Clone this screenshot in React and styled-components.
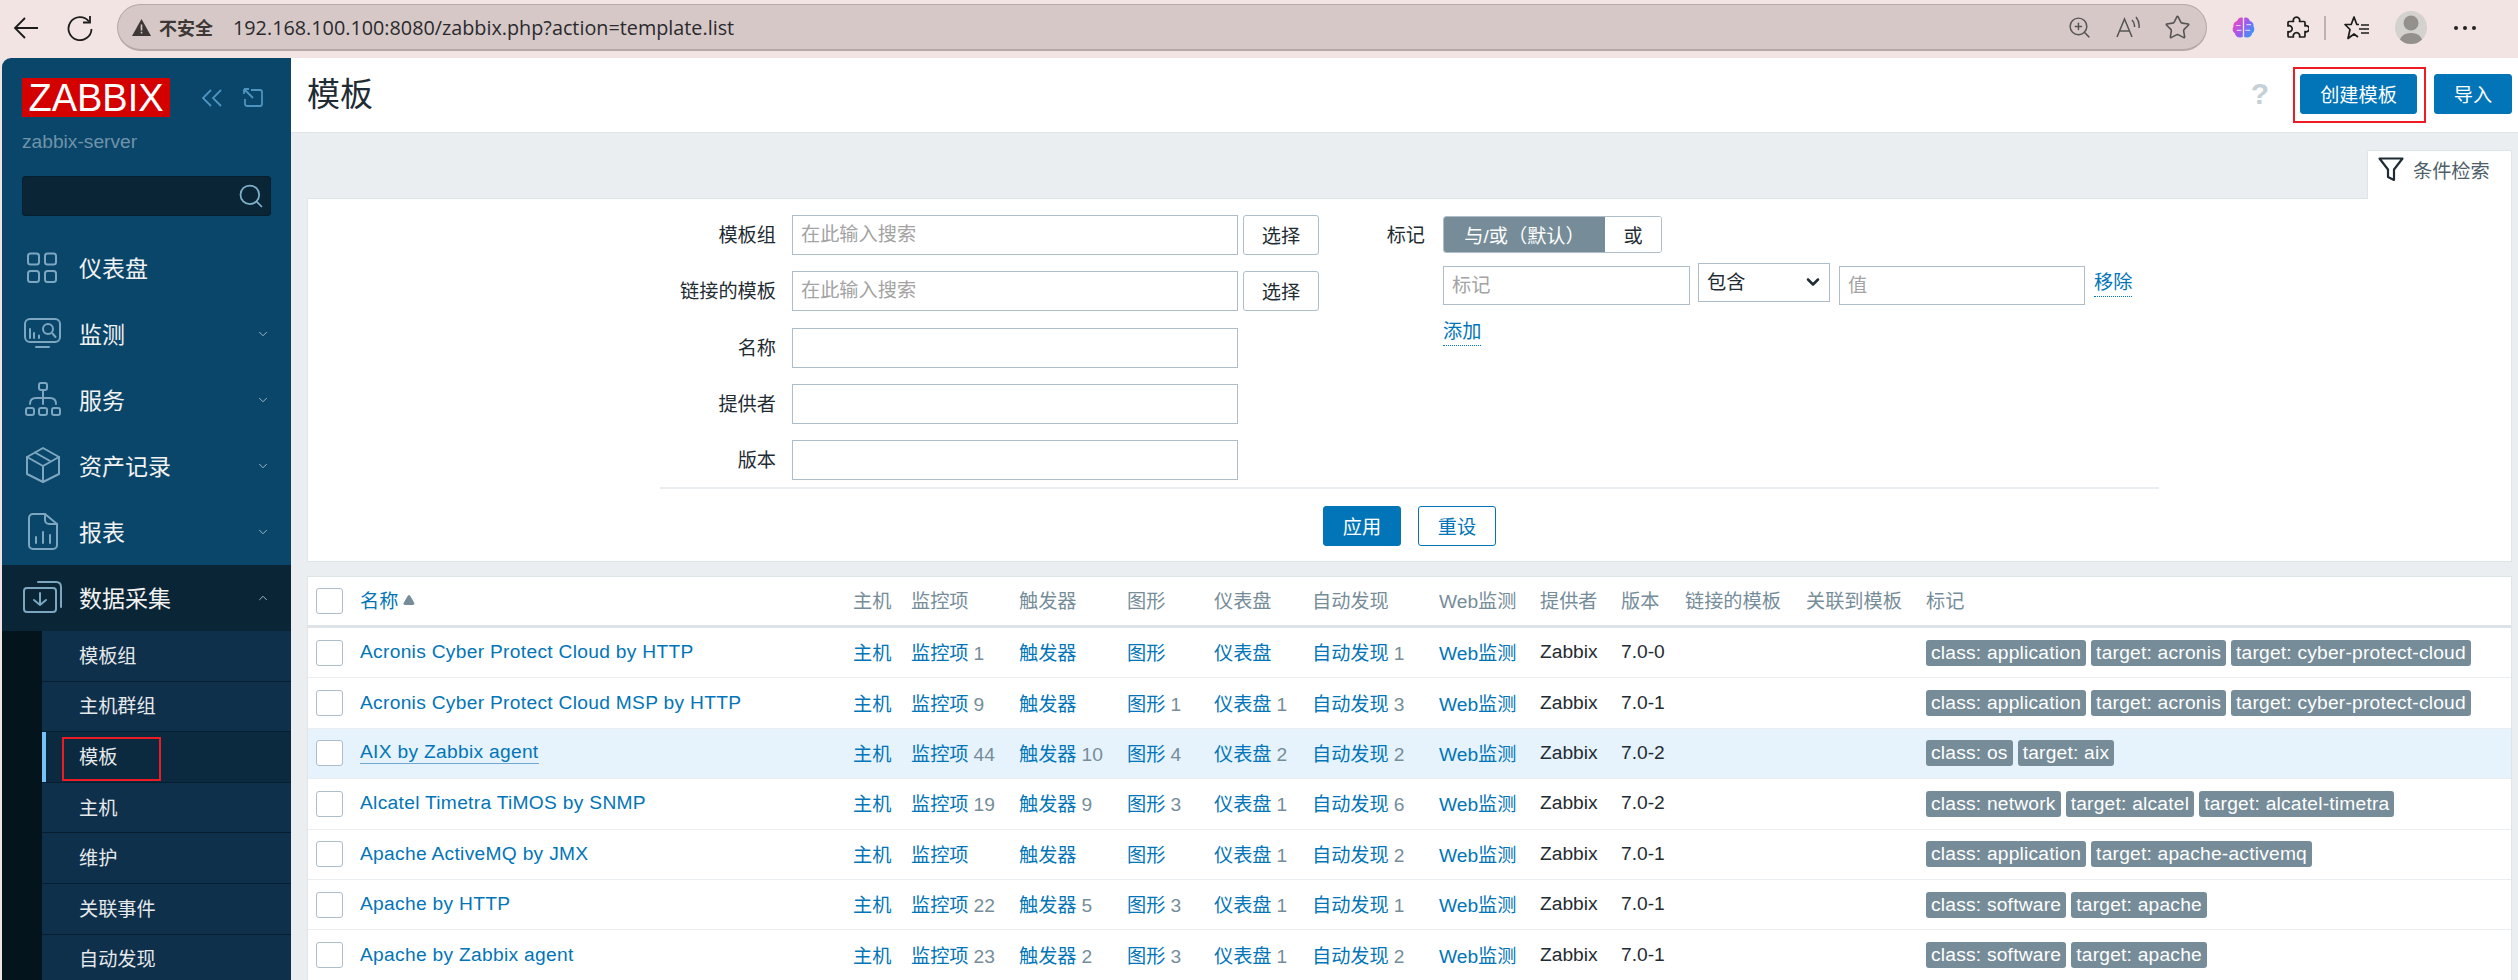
import React from "react";
import styled, { createGlobalStyle } from "styled-components";
import { ChevronDown, ChevronUp, Search, Star, ZoomIn, Triangle } from "lucide-react";

const GlobalStyle = createGlobalStyle`
  html, body {
    margin: 0;
    padding: 0;
    height: 980px;
    overflow: hidden;
    background: #f2e4e2;
    font-family: "Liberation Sans", "Noto Sans CJK SC", sans-serif;
    font-size: 19.2px;
    color: #1f2c33;
  }
  * {
    box-sizing: border-box;
  }
`;

const Page = styled.div`
  display: flex;
  flex-direction: column;
  width: 2518px;
  height: 980px;
  overflow: hidden;
`;

/* browser chrome */
const BrowserBar = styled.div`
  display: flex;
  align-items: center;
  flex: 0 0 58px;
  height: 58px;
  padding-bottom: 3px;
  background: #f2e4e2;
`;

const NavSlot = styled.div`
  display: flex;
  justify-content: center;
  align-items: center;
  width: ${(p) => p.$w || 54}px;
  flex: none;
  margin-left: ${(p) => p.$ml || 0}px;
`;

const AddressPill = styled.div`
  display: flex;
  align-items: center;
  width: 2090px;
  height: 47px;
  margin-left: 24px;
  margin-right: 9px;
  padding: 0 14px;
  border: 1px solid #b5a8a6;
  border-bottom-width: 2px;
  border-radius: 24px;
  background: #d6c8c6;
  flex: none;
`;

const Insecure = styled.span`
  margin-left: 8px;
  font-size: 18px;
  font-weight: 700;
  color: #3d3836;
  white-space: nowrap;
`;

const Url = styled.span`
  margin-left: 20px;
  font-family: "Open Sans", sans-serif;
  font-size: 19.8px;
  color: #2a2a2e;
  white-space: nowrap;
`;

const PillIcons = styled.div`
  display: flex;
  align-items: center;
  gap: 24px;
  margin-left: auto;
  margin-right: 1px;
  color: #555;
`;

const ToolDivider = styled.div`
  width: 2px;
  height: 24px;
  flex: none;
  background: #bfb3b1;
`;

const Dots = styled.span`
  display: flex;
  gap: 5px;
  i {
    display: block;
    width: 4px;
    height: 4px;
    border-radius: 50%;
    background: #222;
  }
`;

const Avatar = styled.div`
  width: 32px;
  height: 33px;
  border-radius: 50%;
  background: #d4d2cf;
  overflow: hidden;
  svg {
    display: block;
  }
`;

/* app frame */
const Frame = styled.div`
  display: flex;
  flex: 1;
  min-height: 0;
`;

const Sidebar = styled.aside`
  display: flex;
  flex-direction: column;
  flex: 0 0 289px;
  margin-left: 2px;
  background: #0a466a;
  border-top-left-radius: 9px;
  overflow: hidden;
`;

const SideHead = styled.div`
  display: flex;
  flex-direction: column;
  flex: none;
  padding: 20px 20px 0;
  height: 177px;
`;

const LogoRow = styled.div`
  display: flex;
  align-items: center;
`;

const Logo = styled.div`
  display: flex;
  align-items: center;
  justify-content: center;
  width: 148px;
  height: 39px;
  line-height: 1;
  background: #d40000;
  color: #fff;
  font-size: 38px;
`;

const LogoTools = styled.div`
  display: flex;
  align-items: center;
  gap: 20px;
  margin-left: 31px;
`;

const ServerName = styled.div`
  margin-top: 13px;
  font-size: 19.2px;
  line-height: 24px;
  color: #6f93a8;
`;

const SideSearch = styled.div`
  display: flex;
  align-items: center;
  justify-content: flex-end;
  width: 249px;
  height: 40px;
  margin-top: 22px;
  padding-right: 5px;
  background: #0a2535;
  border: 1px solid #06202f;
  border-radius: 3px;
  color: #7fb0c8;
`;

const MenuItem = styled.div`
  display: flex;
  align-items: center;
  height: 66px;
  padding-left: 21px;
  padding-right: 20px;
  font-size: 23px;
  color: #f2f2f2;
  background: ${(p) => (p.$open ? "#0a2535" : "transparent")};
  flex: none;
`;

const MenuIcon = styled.span`
  display: flex;
  width: 40px;
  height: 40px;
  flex: none;
  margin-right: 16px;
  color: #7da7c0;
`;

const MenuLabel = styled.span`
  flex: 1;
  margin-bottom: 3px;
`;

const MenuChevron = styled.span`
  display: flex;
  color: #a8c0cf;
  margin-right: 1px;
`;

const SubMenu = styled.div`
  display: flex;
  flex-direction: column;
  margin-left: 40px;
  background: #0f304b;
  box-shadow: -40px 0 0 #04141c;
  flex: 1;
`;

const SubItem = styled.div`
  position: relative;
  display: flex;
  align-items: center;
  flex: none;
  height: 50.6px;
  padding-left: 37px;
  padding-bottom: 2px;
  font-size: 19.2px;
  color: #e6e9eb;
  border-bottom: 1px solid #061e30;
  background: ${(p) => (p.$active ? "#0b2a40" : "transparent")};
  ${(p) => p.$active && "box-shadow: inset 4px 0 0 #74c2f7;"}
  ${(p) =>
    p.$active &&
    `&::after {
      content: "";
      position: absolute;
      left: 20px;
      top: 5px;
      width: 95px;
      height: 40px;
      border: 2px solid #ed1c24;
    }`}
`;

const Main = styled.main`
  display: flex;
  flex-direction: column;
  flex: 1;
  min-width: 0;
  background: #ebeef0;
`;

const Header = styled.header`
  display: flex;
  align-items: center;
  flex: 0 0 75px;
  padding: 0 6px 3px 16px;
  background: #fff;
  border-bottom: 1px solid #dfe4e7;
`;

const Title = styled.h1`
  margin: 0 0 3px;
  font-size: 33px;
  font-weight: 400;
  color: #1f2c33;
`;

const Help = styled.span`
  margin-left: auto;
  margin-right: 31px;
  font-size: 30px;
  font-weight: 700;
  color: #c5d0d7;
`;

const Button = styled.button`
  position: relative;
  display: inline-flex;
  align-items: center;
  justify-content: center;
  width: ${(p) => p.$w}px;
  height: ${(p) => p.$h || 40}px;
  margin-left: ${(p) => p.$ml || 0}px;
  padding: 0;
  flex: none;
  font: inherit;
  color: ${(p) => (p.$variant === "primary" ? "#fff" : p.$variant === "outline" ? "#0275b8" : "#1f2c33")};
  background: ${(p) => (p.$variant === "primary" ? "#0275b8" : "#fff")};
  border: 1px solid ${(p) => (p.$variant === "plain" ? "#aebdc7" : "#0275b8")};
  border-radius: 3px;
  ${(p) =>
    p.$marked &&
    `&::after {
      content: "";
      position: absolute;
      left: -8px;
      right: -10px;
      top: -8px;
      bottom: -10px;
      border: 2px solid #ed1c24;
    }`}
`;

const Content = styled.div`
  display: flex;
  flex-direction: column;
  padding: 0 6px 0 16px;
`;

const TabRow = styled.div`
  display: flex;
  justify-content: flex-end;
  height: 65px;
  padding-top: 17px;
`;

const FilterTab = styled.div`
  display: flex;
  align-items: center;
  width: 145px;
  height: 49px;
  margin-bottom: -1px;
  padding: 0 0 11px 10px;
  gap: 9px;
  background: #fff;
  border: 1px solid #dfe4e7;
  border-bottom: none;
  border-radius: 2px 2px 0 0;
  color: #4f5f69;
  position: relative;
  z-index: 1;
`;

const FilterPanel = styled.section`
  display: flex;
  flex-direction: column;
  align-items: center;
  height: 364px;
  padding-top: 16px;
  background: #fff;
  border: 1px solid #dfe4e7;
`;

const FilterBody = styled.div`
  display: flex;
  width: 1499px;
  height: 274px;
  border-bottom: 2px solid #ebeef0;
`;

const FilterLeft = styled.div`
  display: grid;
  grid-template-columns: 127px 446px 76px;
  grid-auto-rows: 40px;
  column-gap: 5px;
  row-gap: 16.3px;
  width: 659px;
  align-items: center;
  flex: none;
`;

const FieldLabel = styled.label`
  justify-self: end;
  margin-right: ${(p) => p.$mr ?? 11}px;
  margin-bottom: 2px;
  white-space: nowrap;
`;

const TagLabel = styled(FieldLabel)`
  margin-top: 5px;
`;

const Field = styled.input`
  width: ${(p) => p.$w || 446}px;
  height: ${(p) => p.$h || 40}px;
  padding: 0 8px;
  font: inherit;
  color: #1f2c33;
  background: #fff;
  border: 1px solid #aebdc7;
  border-radius: 0;
  outline: none;
  flex: none;
  &::placeholder {
    color: #a3a3a3;
    opacity: 1;
  }
`;

const FilterRight = styled.div`
  display: grid;
  grid-template-columns: 106px 1fr;
  column-gap: 18px;
  align-content: start;
`;

const TagControls = styled.div`
  display: flex;
  flex-direction: column;
  align-items: flex-start;
`;

const Toggle = styled.div`
  display: flex;
  width: 219px;
  height: 37px;
  margin-top: 1px;
  border: 1px solid #aebdc7;
  border-radius: 3px;
  overflow: hidden;
`;

const ToggleOption = styled.span`
  display: flex;
  align-items: center;
  justify-content: center;
  width: ${(p) => p.$w}px;
  background: ${(p) => (p.$on ? "#768d99" : "#fff")};
  color: ${(p) => (p.$on ? "#fff" : "#1f2c33")};
  flex: none;
`;

const TagRow = styled.div`
  display: flex;
  align-items: flex-start;
  margin-top: 13px;
`;

const SelectWrap = styled.div`
  position: relative;
  width: 132px;
  height: 39px;
  margin: -3px 9px 0 8px;
  flex: none;
  svg {
    position: absolute;
    right: 7px;
    top: 9px;
    pointer-events: none;
  }
`;

const Select = styled.select`
  appearance: none;
  width: 100%;
  height: 100%;
  padding: 0 8px;
  font: inherit;
  color: #1f2c33;
  background: #fff;
  border: 1px solid #aebdc7;
  border-radius: 0;
`;

const DottedLink = styled.a`
  display: inline-block;
  line-height: 26px;
  color: #0275b8;
  border-bottom: 1px dotted #0275b8;
  margin: ${(p) => p.$m || 0};
`;

const FilterActions = styled.div`
  display: flex;
  justify-content: center;
  gap: 17px;
  margin-top: 17px;
`;

const Table = styled.div`
  display: flex;
  flex-direction: column;
  margin-top: 14px;
  background: #fff;
  border: 1px solid #dfe4e7;
  border-bottom: none;
`;

const gridColumns =
  "52px 493px 58px 108px 108px 87px 98px 127px 101px 81px 64px 121px 120px 1fr";

const HeadRow = styled.div`
  display: grid;
  grid-template-columns: ${gridColumns};
  align-items: center;
  height: 51px;
  padding-bottom: 3px;
  border-bottom: 3px solid #dee3e8;
  color: #768d99;
  white-space: nowrap;
`;

const Row = styled.div`
  display: grid;
  grid-template-columns: ${gridColumns};
  align-items: center;
  flex: none;
  height: 50.4px;
  padding-bottom: 1px;
  border-bottom: 1px solid #ebeef0;
  background: ${(p) => (p.$hover ? "#e6f3fd" : "#fff")};
  white-space: nowrap;
`;

const CheckCell = styled.div`
  display: flex;
  padding-left: 8px;
  margin-bottom: -1px;
`;

const HeadCheckCell = styled(CheckCell)`
  margin-bottom: -3px;
`;

const Check = styled.span`
  display: block;
  width: 27px;
  height: 26px;
  background: #fff;
  border: 1px solid #aebdc7;
  border-radius: 3px;
`;

const SortHead = styled.span`
  display: flex;
  align-items: center;
  gap: 5px;
  color: #0275b8;
`;

const Link = styled.a`
  color: #0275b8;
  ${(p) => p.$underline && "border-bottom: 1px solid #6fa9d2;"}
`;

const NameCell = styled.div`
  display: flex;
  letter-spacing: 0.3px;
`;

const Count = styled.span`
  margin-left: 5px;
  color: #768d99;
`;

const Tags = styled.div`
  display: flex;
  gap: 5px;
  margin-bottom: -1px;
`;

const Tag = styled.span`
  height: 26px;
  padding: 0 5px;
  line-height: 25px;
  letter-spacing: 0.22px;
  color: #fff;
  background: #768d99;
  border-radius: 3px;
`;

/* drawings */
const Glyph = ({ size = 40, children, ...rest }) => (
  <svg
    width={size}
    height={size}
    viewBox={`0 0 ${size} ${size}`}
    fill="none"
    stroke="currentColor"
    strokeWidth="2"
    strokeLinecap="round"
    strokeLinejoin="round"
    {...rest}
  >
    {children}
  </svg>
);

const DashboardIcon = () => (
  <Glyph>
    <rect x="5" y="5.5" width="11" height="11" rx="2.5" />
    <rect x="22" y="5.5" width="11" height="11" rx="2.5" />
    <rect x="5" y="23" width="11" height="11" rx="2.5" />
    <rect x="22" y="23" width="11" height="11" rx="2.5" />
  </Glyph>
);

const MonitorIcon = () => (
  <Glyph>
    <rect x="2" y="5" width="35" height="23" rx="5" />
    <path d="M13 33h13M7 15v9M11 19v5M16 21.5v2.5M29.5 19.5l3 3.5" />
    <circle cx="25" cy="15" r="5" />
  </Glyph>
);

const ServicesIcon = () => (
  <Glyph>
    <rect x="16" y="3" width="8" height="7" rx="2" />
    <rect x="3" y="28" width="8" height="7" rx="2" />
    <rect x="16" y="28" width="8" height="7" rx="2" />
    <rect x="29" y="28" width="8" height="7" rx="2" />
    <path d="M20 10v14M7 24q0-6 6-6h14q6 0 6 6" />
  </Glyph>
);

const BoxIcon = () => (
  <Glyph>
    <path d="M20 2l16 9v17l-16 8-16-8V11z" />
    <path d="M4 11l16 9 16-9M20 20v16M12 6.5l16 9" />
  </Glyph>
);

const ReportIcon = () => (
  <Glyph>
    <path d="M22 2H10a4 4 0 0 0-4 4v27a4 4 0 0 0 4 4h20a4 4 0 0 0 4-4V12z" />
    <path d="M22 2v6a4 4 0 0 0 4 4h8M13 25v6M20 20v11M27 23v8" />
  </Glyph>
);

const DataIcon = () => (
  <Glyph>
    <rect x="1" y="10" width="32" height="24" rx="3" />
    <path d="M15 4h18q5 0 5 5v20M17 15v12M11 22l6 5 6-5" />
  </Glyph>
);

const BackArrow = () => (
  <svg width="26" height="24" viewBox="0 0 26 24" fill="none" stroke="#1c1c1c" strokeWidth="1.8">
    <path d="M25 12H2M12 2L2 12l10 10" />
  </svg>
);

const Reload = () => (
  <svg width="26" height="26" viewBox="0 0 26 26" fill="none" stroke="#1c1c1c" strokeWidth="1.8">
    <path d="M22 6.5A11.5 11.5 0 1 0 24.5 14" />
    <path d="M16 7.5h7V1" />
  </svg>
);

const WarningIcon = () => (
  <svg width="19" height="17" viewBox="0 0 19 17">
    <path d="M9.500 0L19 17H0z" fill="#3d3836" />
    <path d="M8.700 5.500h1.600v6H8.700zM8.700 12.800h1.600v1.700H8.700z" fill="#d6c8c6" />
  </svg>
);

const ReadAloud = () => (
  <svg width="24" height="24" viewBox="0 0 24 24" fill="none" stroke="#555" strokeWidth="1.5">
    <path d="M1 22L8.500 4 16 22M3.800 16h9.400M16 5q3 3 2.500 7M20 2q4 5 3 11" />
  </svg>
);

const BrainIcon = () => (
  <svg width="23" height="23" viewBox="0 0 24 24">
    <defs>
      <linearGradient id="brainGrad" x1="0" y1="0.2" x2="1" y2="0.8">
        <stop offset="0" stopColor="#f648b8" />
        <stop offset="0.5" stopColor="#9a5cf0" />
        <stop offset="1" stopColor="#2a9df8" />
      </linearGradient>
    </defs>
    <path
      d="M11.300 2C8.500 1 6 2.500 5.500 5 2.500 5.800 1 8.500 1.500 11 0 13.500.5 16.500 3 18c.3 3 3.500 5.500 8.300 4zM12.700 2c2.800-1 5.300.5 5.800 3 3 .8 4.500 3.500 4 6 1.500 2.500 1 5.500-1.500 7-.3 3-3.500 5.500-8.300 4z"
      fill="url(#brainGrad)"
    />
    <path d="M4 10h5M15 9h5M5 15h5M14 15h5" stroke="#fff" strokeWidth="1.100" opacity="0.65" />
  </svg>
);

const ExtensionIcon = () => (
  <svg width="24" height="24" viewBox="0 0 24 24" fill="none" stroke="#1c1c1c" strokeWidth="1.700" strokeLinejoin="round">
    <path d="M8.500 5.500a3.200 3.200 0 1 1 6 0H19a1 1 0 0 1 1 1V10a3 3 0 1 1 0 5.500V20a1 1 0 0 1-1 1h-4.500a3.200 3.200 0 1 0-6 0H4a1 1 0 0 1-1-1v-4.500a3 3 0 1 0 0-5.500V6.500a1 1 0 0 1 1-1z" />
  </svg>
);

const FavoritesIcon = () => (
  <svg width="26" height="24" viewBox="0 0 26 24" fill="none" stroke="#1c1c1c" strokeWidth="1.700" strokeLinejoin="round">
    <path d="M15 8.500h-2.200L10 1 7.200 8.500H1l5 5-2 9 6-4.500 4 3" />
    <path d="M17 9h8M15 13h10M17 17h8" />
  </svg>
);

const CollapseIcon = () => (
  <svg width="22" height="18" viewBox="0 0 22 18" fill="none" stroke="#4d94c0" strokeWidth="1.800">
    <path d="M10 1L2 9l8 8M20 1l-8 8 8 8" />
  </svg>
);

const KioskIcon = () => (
  <svg width="20" height="19" viewBox="0 0 20 19" fill="none" stroke="#4d94c0" strokeWidth="1.800">
    <path d="M8 2h9a2 2 0 0 1 2 2v12a2 2 0 0 1-2 2H4a2 2 0 0 1-2-2v-5M1 1l9 9M1 1h5M1 1v5" />
  </svg>
);

const FunnelIcon = () => (
  <svg width="26" height="25" viewBox="0 0 26 25" fill="none" stroke="#1f2c33" strokeWidth="2.200" strokeLinejoin="round">
    <path d="M1.500 1.500h23L16 12.500V23l-6-3v-7.500z" />
  </svg>
);

const menu = [
  { label: "仪表盘", icon: <DashboardIcon /> },
  { label: "监测", icon: <MonitorIcon />, more: true },
  { label: "服务", icon: <ServicesIcon />, more: true },
  { label: "资产记录", icon: <BoxIcon />, more: true },
  { label: "报表", icon: <ReportIcon />, more: true },
];

const subMenu = ["模板组", "主机群组", "模板", "主机", "维护", "关联事件", "自动发现"];

const classApp = "class: application";
const rows = [
  { name: "Acronis Cyber Protect Cloud by HTTP", items: 1, disc: 1, ver: "7.0-0", tags: [classApp, "target: acronis", "target: cyber-protect-cloud"] },
  { name: "Acronis Cyber Protect Cloud MSP by HTTP", items: 9, graphs: 1, dash: 1, disc: 3, ver: "7.0-1", tags: [classApp, "target: acronis", "target: cyber-protect-cloud"] },
  { name: "AIX by Zabbix agent", items: 44, trig: 10, graphs: 4, dash: 2, disc: 2, ver: "7.0-2", tags: ["class: os", "target: aix"], hover: true },
  { name: "Alcatel Timetra TiMOS by SNMP", items: 19, trig: 9, graphs: 3, dash: 1, disc: 6, ver: "7.0-2", tags: ["class: network", "target: alcatel", "target: alcatel-timetra"] },
  { name: "Apache ActiveMQ by JMX", dash: 1, disc: 2, ver: "7.0-1", tags: [classApp, "target: apache-activemq"] },
  { name: "Apache by HTTP", items: 22, trig: 5, graphs: 3, dash: 1, disc: 1, ver: "7.0-1", tags: ["class: software", "target: apache"] },
  { name: "Apache by Zabbix agent", items: 23, trig: 2, graphs: 3, dash: 1, disc: 2, ver: "7.0-1", tags: ["class: software", "target: apache"] },
];

const heads = ["主机", "监控项", "触发器", "图形", "仪表盘", "自动发现", "Web监测", "提供者", "版本", "链接的模板", "关联到模板", "标记"];

const CountLink = ({ label, n }) => (
  <div>
    <Link>{label}</Link>
    {n !== undefined && <Count>{n}</Count>}
  </div>
);

const App = () => (
  <Page>
    <GlobalStyle />
    <BrowserBar>
      <NavSlot $w={26} $ml={13}>
        <BackArrow />
      </NavSlot>
      <NavSlot $w={26} $ml={28}>
        <Reload />
      </NavSlot>
      <AddressPill>
        <WarningIcon />
        <Insecure>不安全</Insecure>
        <Url>192.168.100.100:8080/zabbix.php?action=template.list</Url>
        <PillIcons>
          <ZoomIn size={25} strokeWidth={1.4} />
          <ReadAloud />
          <Star size={27} strokeWidth={1.4} />
        </PillIcons>
      </AddressPill>
      <NavSlot>
        <BrainIcon />
      </NavSlot>
      <NavSlot>
        <ExtensionIcon />
      </NavSlot>
      <ToolDivider />
      <NavSlot $ml={4}>
        <FavoritesIcon />
      </NavSlot>
      <NavSlot>
        <Avatar>
          <svg width="32" height="33" viewBox="0 0 32 33">
            <circle cx="16" cy="12" r="7.500" fill="#94908b" />
            <path d="M4 33q1-11 12-11t12 11z" fill="#94908b" />
          </svg>
        </Avatar>
      </NavSlot>
      <NavSlot>
        <Dots>
          <i />
          <i />
          <i />
        </Dots>
      </NavSlot>
    </BrowserBar>

    <Frame>
      <Sidebar>
        <SideHead>
          <LogoRow>
            <Logo>ZABBIX</Logo>
            <LogoTools>
              <CollapseIcon />
              <KioskIcon />
            </LogoTools>
          </LogoRow>
          <ServerName>zabbix-server</ServerName>
          <SideSearch>
            <Search size={28} strokeWidth={1.5} />
          </SideSearch>
        </SideHead>
        {menu.map((m) => (
          <MenuItem key={m.label}>
            <MenuIcon>{m.icon}</MenuIcon>
            <MenuLabel>{m.label}</MenuLabel>
            {m.more && (
              <MenuChevron>
                <ChevronDown size={14} strokeWidth={1.6} />
              </MenuChevron>
            )}
          </MenuItem>
        ))}
        <MenuItem $open>
          <MenuIcon>
            <DataIcon />
          </MenuIcon>
          <MenuLabel>数据采集</MenuLabel>
          <MenuChevron>
            <ChevronUp size={14} strokeWidth={1.6} />
          </MenuChevron>
        </MenuItem>
        <SubMenu>
          {subMenu.map((s) => (
            <SubItem key={s} $active={s === "模板"}>
              {s}
            </SubItem>
          ))}
        </SubMenu>
      </Sidebar>

      <Main>
        <Header>
          <Title>模板</Title>
          <Help>?</Help>
          <Button $variant="primary" $w={117} $marked>
            创建模板
          </Button>
          <Button $variant="primary" $w={78} $ml={17}>
            导入
          </Button>
        </Header>
        <Content>
          <TabRow>
            <FilterTab>
              <FunnelIcon />
              条件检索
            </FilterTab>
          </TabRow>
          <FilterPanel>
            <FilterBody>
              <FilterLeft>
                <FieldLabel>模板组</FieldLabel>
                <Field placeholder="在此输入搜索" />
                <Button $variant="plain" $w={76}>
                  选择
                </Button>
                <FieldLabel>链接的模板</FieldLabel>
                <Field placeholder="在此输入搜索" />
                <Button $variant="plain" $w={76}>
                  选择
                </Button>
                <FieldLabel>名称</FieldLabel>
                <Field />
                <span />
                <FieldLabel>提供者</FieldLabel>
                <Field />
                <span />
                <FieldLabel>版本</FieldLabel>
                <Field />
                <span />
              </FilterLeft>
              <FilterRight>
                <TagLabel $mr={0}>标记</TagLabel>
                <TagControls>
                  <Toggle>
                    <ToggleOption $on $w={161}>
                      与/或（默认）
                    </ToggleOption>
                    <ToggleOption $w={56}>或</ToggleOption>
                  </Toggle>
                  <TagRow>
                    <Field placeholder="标记" $w={247} $h={39} />
                    <SelectWrap>
                      <Select defaultValue="contains">
                        <option value="contains">包含</option>
                      </Select>
                      <ChevronDown size={20} strokeWidth={3} color="#1f2c33" />
                    </SelectWrap>
                    <Field placeholder="值" $w={246} $h={39} />
                    <DottedLink $m="4px 0 0 9px">移除</DottedLink>
                  </TagRow>
                  <DottedLink $m="14px 0 0 0">添加</DottedLink>
                </TagControls>
              </FilterRight>
            </FilterBody>
            <FilterActions>
              <Button $variant="primary" $w={78}>
                应用
              </Button>
              <Button $variant="outline" $w={78}>
                重设
              </Button>
            </FilterActions>
          </FilterPanel>

          <Table>
            <HeadRow>
              <HeadCheckCell>
                <Check />
              </HeadCheckCell>
              <SortHead>
                名称
                <Triangle size={12} fill="#768d99" stroke="#768d99" />
              </SortHead>
              {heads.map((h) => (
                <span key={h}>{h}</span>
              ))}
            </HeadRow>
            {rows.map((r) => (
              <Row key={r.name} $hover={r.hover}>
                <CheckCell>
                  <Check />
                </CheckCell>
                <NameCell>
                  <Link $underline={r.hover}>{r.name}</Link>
                </NameCell>
                <Link>主机</Link>
                <CountLink label="监控项" n={r.items} />
                <CountLink label="触发器" n={r.trig} />
                <CountLink label="图形" n={r.graphs} />
                <CountLink label="仪表盘" n={r.dash} />
                <CountLink label="自动发现" n={r.disc} />
                <Link>Web监测</Link>
                <span>Zabbix</span>
                <span>{r.ver}</span>
                <span />
                <span />
                <Tags>
                  {r.tags.map((t) => (
                    <Tag key={t}>{t}</Tag>
                  ))}
                </Tags>
              </Row>
            ))}
          </Table>
        </Content>
      </Main>
    </Frame>
  </Page>
);

export default App;
